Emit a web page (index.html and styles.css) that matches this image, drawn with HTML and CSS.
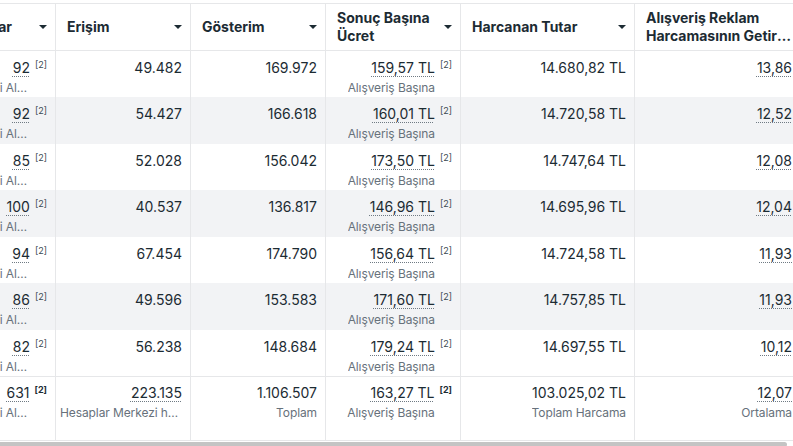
FILE: index.html
```html
<!DOCTYPE html>
<html lang="tr">
<head>
<meta charset="utf-8">
<title>Reklam Raporu</title>
<link rel="stylesheet" href="styles.css">
</head>
<body>
<div class="viewport">
  <div class="table">
    <!-- header -->
    <div class="th c1"><span class="h-text">Sonuçlar</span><span class="caret"></span></div>
    <div class="th"><span class="h-text">Erişim</span><span class="caret"></span></div>
    <div class="th"><span class="h-text">Gösterim</span><span class="caret"></span></div>
    <div class="th"><span class="h-text">Sonuç Başına<br>Ücret</span><span class="caret"></span></div>
    <div class="th"><span class="h-text">Harcanan Tutar</span><span class="caret"></span></div>
    <div class="th"><span class="h-text wide"><span class="h-line">Alışveriş Reklam</span><span class="h-line">Harcamasının Getirisi (ROAS)</span></span><span class="caret"></span></div>

    <!-- row 1 -->
    <div class="td"><div class="stack"><span class="val dotted">92</span><span class="sub">Web Sitesi Alışverişleri</span></div><span class="fn">[2]</span></div>
    <div class="td"><span class="val">49.482</span></div>
    <div class="td"><span class="val">169.972</span></div>
    <div class="td"><div class="stack"><span class="val dotted">159,57 TL</span><span class="sub">Alışveriş Başına</span></div><span class="fn">[2]</span></div>
    <div class="td"><span class="val">14.680,82 TL</span></div>
    <div class="td"><span class="val dotted">13,86</span></div>

    <!-- row 2 -->
    <div class="td alt"><div class="stack"><span class="val dotted">92</span><span class="sub">Web Sitesi Alışverişleri</span></div><span class="fn">[2]</span></div>
    <div class="td alt"><span class="val">54.427</span></div>
    <div class="td alt"><span class="val">166.618</span></div>
    <div class="td alt"><div class="stack"><span class="val dotted">160,01 TL</span><span class="sub">Alışveriş Başına</span></div><span class="fn">[2]</span></div>
    <div class="td alt"><span class="val">14.720,58 TL</span></div>
    <div class="td alt"><span class="val dotted">12,52</span></div>

    <!-- row 3 -->
    <div class="td"><div class="stack"><span class="val dotted">85</span><span class="sub">Web Sitesi Alışverişleri</span></div><span class="fn">[2]</span></div>
    <div class="td"><span class="val">52.028</span></div>
    <div class="td"><span class="val">156.042</span></div>
    <div class="td"><div class="stack"><span class="val dotted">173,50 TL</span><span class="sub">Alışveriş Başına</span></div><span class="fn">[2]</span></div>
    <div class="td"><span class="val">14.747,64 TL</span></div>
    <div class="td"><span class="val dotted">12,08</span></div>

    <!-- row 4 -->
    <div class="td alt"><div class="stack"><span class="val dotted">100</span><span class="sub">Web Sitesi Alışverişleri</span></div><span class="fn">[2]</span></div>
    <div class="td alt"><span class="val">40.537</span></div>
    <div class="td alt"><span class="val">136.817</span></div>
    <div class="td alt"><div class="stack"><span class="val dotted">146,96 TL</span><span class="sub">Alışveriş Başına</span></div><span class="fn">[2]</span></div>
    <div class="td alt"><span class="val">14.695,96 TL</span></div>
    <div class="td alt"><span class="val dotted">12,04</span></div>

    <!-- row 5 -->
    <div class="td"><div class="stack"><span class="val dotted">94</span><span class="sub">Web Sitesi Alışverişleri</span></div><span class="fn">[2]</span></div>
    <div class="td"><span class="val">67.454</span></div>
    <div class="td"><span class="val">174.790</span></div>
    <div class="td"><div class="stack"><span class="val dotted">156,64 TL</span><span class="sub">Alışveriş Başına</span></div><span class="fn">[2]</span></div>
    <div class="td"><span class="val">14.724,58 TL</span></div>
    <div class="td"><span class="val dotted">11,93</span></div>

    <!-- row 6 -->
    <div class="td alt"><div class="stack"><span class="val dotted">86</span><span class="sub">Web Sitesi Alışverişleri</span></div><span class="fn">[2]</span></div>
    <div class="td alt"><span class="val">49.596</span></div>
    <div class="td alt"><span class="val">153.583</span></div>
    <div class="td alt"><div class="stack"><span class="val dotted">171,60 TL</span><span class="sub">Alışveriş Başına</span></div><span class="fn">[2]</span></div>
    <div class="td alt"><span class="val">14.757,85 TL</span></div>
    <div class="td alt"><span class="val dotted">11,93</span></div>

    <!-- row 7 -->
    <div class="td"><div class="stack"><span class="val dotted">82</span><span class="sub">Web Sitesi Alışverişleri</span></div><span class="fn">[2]</span></div>
    <div class="td"><span class="val">56.238</span></div>
    <div class="td"><span class="val">148.684</span></div>
    <div class="td"><div class="stack"><span class="val dotted">179,24 TL</span><span class="sub">Alışveriş Başına</span></div><span class="fn">[2]</span></div>
    <div class="td"><span class="val">14.697,55 TL</span></div>
    <div class="td"><span class="val dotted">10,12</span></div>

    <!-- totals -->
    <div class="td tf"><div class="stack"><span class="val dotted">631</span><span class="sub">Web Sitesi Alışverişleri</span></div><span class="fn bold">[2]</span></div>
    <div class="td tf"><div class="stack"><span class="val dotted">223.135</span><span class="sub">Hesaplar Merkezi hesapları</span></div></div>
    <div class="td tf"><div class="stack"><span class="val">1.106.507</span><span class="sub">Toplam</span></div></div>
    <div class="td tf"><div class="stack"><span class="val dotted">163,27 TL</span><span class="sub">Alışveriş Başına</span></div><span class="fn bold">[2]</span></div>
    <div class="td tf"><div class="stack"><span class="val">103.025,02 TL</span><span class="sub">Toplam Harcama</span></div></div>
    <div class="td tf"><div class="stack"><span class="val dotted">12,07</span><span class="sub">Ortalama</span></div></div>
  </div>
  <div class="scrollbar"><div class="thumb"></div></div>
</div>
</body>
</html>
```

FILE: styles.css
```css
* { box-sizing: border-box; }

html, body {
  margin: 0;
  padding: 0;
  background: #ffffff;
}

body {
  font-family: Inter, "Liberation Sans", sans-serif;
  color: #1c2b33;
  overflow: hidden;
}

.viewport {
  width: 793px;
  height: 446px;
  overflow: hidden;
  padding-top: 3px;
}

.table {
  display: grid;
  grid-template-columns: 116px 135px 135px 135px 174px 166px;
  grid-template-rows: 48px repeat(7, 46.43px) 65px;
  margin-left: -60px;
  width: max-content;
}

.th {
  display: flex;
  align-items: center;
  gap: 6px;
  padding: 0 8px 0 11px;
  border-top: 1px solid #e6e7e9;
  border-bottom: 1px solid #e6e7e9;
  border-right: 1px solid #e6e7e9;
  font-size: 14px;
  font-weight: 700;
  line-height: 18px;
  background: #ffffff;
  overflow: hidden;
}

.h-text {
  flex: 1;
  min-width: 0;
}

.h-text.wide {
  flex: none;
  width: 147px;
}

.h-line {
  display: block;
  white-space: nowrap;
  overflow: hidden;
  text-overflow: ellipsis;
}

.caret {
  flex: none;
  width: 0;
  height: 0;
  border-left: 4px solid transparent;
  border-right: 4px solid transparent;
  border-top: 4px solid #1c2b33;
}

.td {
  display: flex;
  justify-content: flex-end;
  align-items: flex-start;
  padding: 7px 8px 0 4px;
  border-right: 1px solid #e6e7e9;
  background: #ffffff;
  min-width: 0;
}

.td.alt {
  background: #f2f3f5;
}

.td.tf {
  border-top: 1px solid #e6e7e9;
  border-bottom: 1px solid #e6e7e9;
  padding-top: 6px;
}

.stack {
  display: flex;
  flex-direction: column;
  align-items: flex-end;
  min-width: 0;
}

.val {
  font-size: 14px;
  line-height: 20px;
  white-space: nowrap;
}

.dotted {
  text-decoration: underline dotted #6f7a83;
  text-decoration-thickness: 1px;
  text-underline-offset: 3px;
}

.sub {
  margin-top: 2px;
  font-size: 12px;
  line-height: 16px;
  letter-spacing: -0.1px;
  color: #67717b;
  white-space: nowrap;
  overflow: hidden;
  text-overflow: ellipsis;
  max-width: 100%;
}

.fn {
  flex: none;
  margin-left: 5px;
  margin-top: 2px;
  font-size: 9px;
  line-height: 10px;
  color: #3a4750;
}

.fn.bold {
  font-weight: 700;
  color: #1c2b33;
}

.scrollbar {
  height: 6px;
  padding-top: 1px;
}

.thumb {
  width: 787px;
  height: 5px;
  background: #c4c4c4;
  border-radius: 0 3px 3px 0;
}
```
